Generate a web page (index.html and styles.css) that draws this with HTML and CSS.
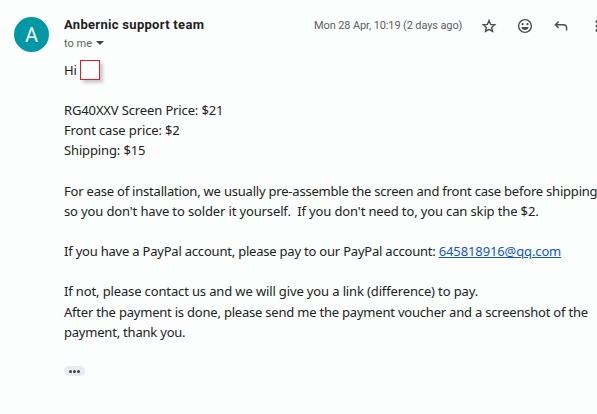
FILE: index.html
```html
<!DOCTYPE html>
<html lang="en">
<head>
    <meta charset="UTF-8">
    <meta name="viewport" content="width=device-width, initial-scale=1.0">
    <title>Anbernic support team</title>
    <link rel="stylesheet" href="styles.css">
</head>
<body>
    <div class="mail">
        <div class="avatar"><span>A</span></div>
        <div class="content">
            <div class="header">
                <div class="sender"><span>Anbernic support team</span></div>
                <div class="date"><span>Mon 28 Apr, 10:19 (2 days ago)</span></div>
                <div class="actions">
                    <svg viewBox="0 0 16 16"><path d="M8 2.6L9.6 6.4 13.7 6.7 10.6 9.4 11.5 13.4 8 11.3 4.5 13.4 5.4 9.4 2.3 6.7 6.4 6.4z"/></svg>
                    <svg viewBox="0 0 16 16"><circle cx="8" cy="8" r="6.4"/><path class="fill" d="M4.3 9h7.4a3.8 3.8 0 0 1-7.4 0z"/><circle class="fill" cx="5.6" cy="6.2" r="1.1"/><circle class="fill" cx="10.4" cy="6.2" r="1.1"/></svg>
                    <svg viewBox="0 0 16 16"><path d="M5.7 3.4L2.4 6.7 5.7 10M2.6 6.7H10.5Q13.6 6.7 13.6 9.8V12.4"/></svg>
                    <svg viewBox="0 0 16 16"><circle class="fill" cx="8" cy="3.5" r="1.5"/><circle class="fill" cx="8" cy="8" r="1.5"/><circle class="fill" cx="8" cy="12.5" r="1.5"/></svg>
                </div>
            </div>
            <div class="to"><span>to me</span><i class="arrow"></i></div>
            <div class="message">
                <p class="hi"><span>Hi</span><span class="name"></span></p>
                <p><span>RG40XXV Screen Price: $21</span></p>
                <p><span>Front case price: $2</span></p>
                <p class="last"><span>Shipping: $15</span></p>
                <p class="tight"><span>For ease of installation, we usually pre-assemble the screen and front case before shipping</span></p>
                <p class="last"><span>so you don't have to solder it yourself.&nbsp; If you don't need to, you can skip the $2.</span></p>
                <p class="last tight"><span>If you have a PayPal account, please pay to our PayPal account: <a href="#">645818916@qq.com</a></span></p>
                <p class="difference"><span>If not, please contact us and we will give you a link (difference) to pay.</span></p>
                <p class="tight"><span>After the payment is done, please send me the payment voucher and a screenshot of the</span></p>
                <p class="tight"><span>payment, thank you.</span></p>
            </div>
            <div class="more"><i></i><i></i><i></i></div>
        </div>
    </div>
</body>
</html>
```
FILE: styles.css
```css
body{
    margin: 0;
    background-color: #fcfefd;
    font-family: "Noto Sans", sans-serif;
    color: #222;
    overflow: hidden;
}
.mail{
    display: flex;
    padding: 15px 0 0 14px;
    width: 597px;
    height: 414px;
    box-sizing: border-box;
}
.avatar{
    display: flex;
    flex: none;
    align-items: center;
    justify-content: center;
    width: 35px;
    height: 35px;
    margin: 2px 15px 0 0;
    border-radius: 50%;
    background-color: #0097a7;
    color: white;
    font-family: Roboto, sans-serif;
    font-size: 20px;
}
.content{
    flex: none;
    width: 533px;
}
.header{
    display: flex;
    align-items: center;
    height: 20px;
    font-family: Roboto, sans-serif;
}
.sender{
    flex: none;
    width: 250px;
    margin-bottom: 2px;
    font-size: 13px;
    font-weight: 700;
    letter-spacing: 0.3px;
    white-space: nowrap;
}
.date{
    flex: none;
    width: 167px;
    font-size: 11px;
    letter-spacing: -0.12px;
    color: #5e5e5e;
    white-space: nowrap;
}
.actions{
    display: flex;
    gap: 20px;
    margin-top: 2px;
}
.actions svg{
    flex: none;
    width: 16px;
    height: 16px;
    fill: none;
    stroke: #4c4c4c;
    stroke-width: 1.4;
}
.actions .fill{
    fill: #4c4c4c;
    stroke: none;
}
.to{
    display: flex;
    align-items: center;
    gap: 4px;
    height: 16px;
    font-family: Roboto, sans-serif;
    font-size: 11px;
    color: #5e5e5e;
}
.arrow{
    border: 4px solid transparent;
    border-top-color: #444;
    border-bottom: 0;
}
.message{
    padding-top: 9px;
    font-size: 13px;
    line-height: 20.1px;
    letter-spacing: -0.135px;
    white-space: nowrap;
}
.message p{
    margin: 0;
}
.message .last{
    margin-bottom: 20.1px;
}
.message .tight{
    letter-spacing: -0.21px;
}
.message .difference{
    margin-bottom: 1px;
}
.message a{
    color: #15c;
    letter-spacing: -0.12px;
}
.message .hi{
    display: flex;
    align-items: center;
    gap: 3px;
    margin-bottom: 20.1px;
}
.name{
    width: 18px;
    height: 18px;
    border: 1px solid #ed1c24;
    background-color: white;
    box-shadow: 3px 3px 3px #ccc;
}
.more{
    display: flex;
    align-items: center;
    justify-content: center;
    gap: 1px;
    width: 21px;
    height: 10px;
    margin-top: 24px;
    border-radius: 5px;
    background-color: #e8eaed;
}
.more i{
    width: 3px;
    height: 3px;
    border-radius: 50%;
    background-color: #444;
}
```
